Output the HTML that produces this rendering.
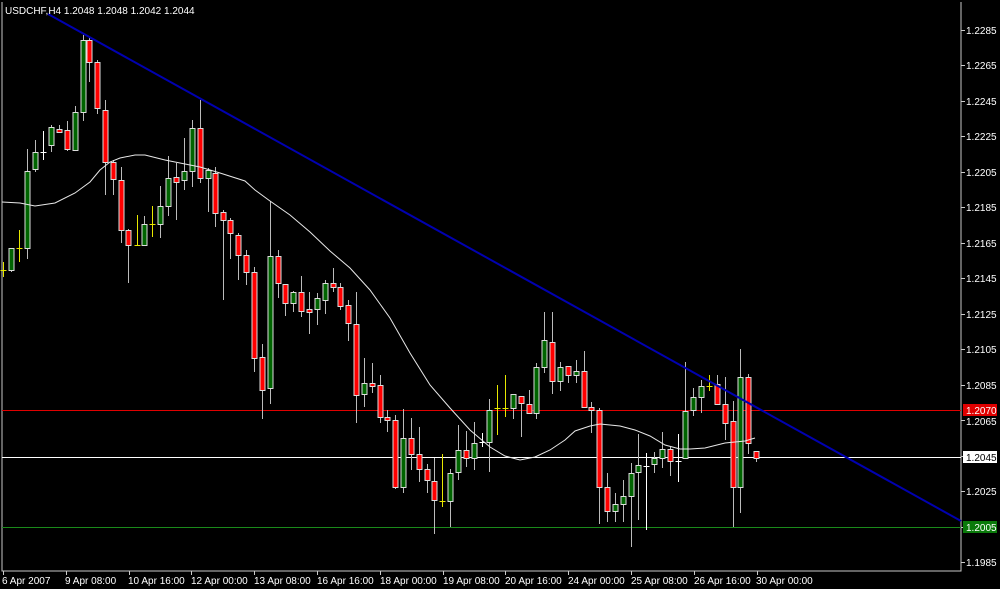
<!DOCTYPE html>
<html><head><meta charset="utf-8"><style>
html,body{margin:0;padding:0;background:#000;width:1000px;height:589px;overflow:hidden}
svg{display:block}
text{font-family:"Liberation Sans",sans-serif;font-size:10px;fill:#fff}
</style></head><body>
<svg id="s" width="1000" height="589" xmlns="http://www.w3.org/2000/svg">
<rect width="1000" height="589" fill="#000"/>
<polyline points="2,2 2,571 961,571 961,2" fill="none" stroke="#c8c8c8" stroke-width="1"/>
<line x1="2" y1="410.5" x2="961" y2="410.5" stroke="#e00000"/>
<line x1="2" y1="457.5" x2="961" y2="457.5" stroke="#ffffff"/>
<line x1="2" y1="527.5" x2="961" y2="527.5" stroke="#1a8a1a"/>
<g id="c"></g>
<polyline fill="none" stroke="#e8e8e8" stroke-width="1" points="2,202 20,203 35,206 55,203 75,193 90,182 100,170 110,162 120,158 135,155 145,155 165,160 185,164 200,167 220,173 245,181 255,190 270,201 290,215 310,232 330,251 350,268 370,290 390,318 410,353 430,385 450,408 470,430 490,447 505,456 520,460 535,457 550,450 565,440 575,431 590,426 600,424 620,426 635,430 650,436 665,445 680,449 690,449 705,448 725,443 745,441 755,438"/>
<line x1="48" y1="14" x2="961" y2="521" stroke="#0000b0" stroke-width="2"/>
<text x="5" y="14" style="font-size:10px">USDCHF,H4  1.2048 1.2048 1.2042 1.2044</text>
<g id="ax"></g>
<rect x="963" y="404" width="34" height="12" fill="#e00000"/>
<text x="966" y="414" >1.2070</text>
<rect x="963" y="451" width="34" height="12" fill="#ffffff"/>
<text x="966" y="461" style="fill:#000">1.2045</text>
<rect x="963" y="521" width="34" height="12" fill="#0a7a0a"/>
<text x="966" y="531">1.2005</text>
<g>
<text x="2" y="584">6 Apr 2007</text>
<text x="65" y="584">9 Apr 08:00</text>
<text x="128" y="584">10 Apr 16:00</text>
<text x="191" y="584">12 Apr 00:00</text>
<text x="254" y="584">13 Apr 08:00</text>
<text x="317" y="584">16 Apr 16:00</text>
<text x="380" y="584">18 Apr 00:00</text>
<text x="443" y="584">19 Apr 08:00</text>
<text x="505" y="584">20 Apr 16:00</text>
<text x="568" y="584">24 Apr 00:00</text>
<text x="631" y="584">25 Apr 08:00</text>
<text x="694" y="584">26 Apr 16:00</text>
<text x="756" y="584">30 Apr 00:00</text>
</g>
<text x="966" y="34">1.2285</text><text x="966" y="69">1.2265</text><text x="966" y="105">1.2245</text><text x="966" y="140">1.2225</text><text x="966" y="176">1.2205</text><text x="966" y="211">1.2185</text><text x="966" y="247">1.2165</text><text x="966" y="282">1.2145</text><text x="966" y="318">1.2125</text><text x="966" y="353">1.2105</text><text x="966" y="389">1.2085</text><text x="966" y="425">1.2065</text><text x="966" y="495">1.2025</text><text x="966" y="566">1.1985</text>
</svg>
<script>
var D=[[3,262,277,270,270,'y'],[11,248,272,270,248],[19,230,262,248,248,'y'],[27,149,259,248,171],[35,140,172,169,152],[43,131,160,152,152,'w'],[51,125,152,145,127],[59,125,133,129,132],[67,121,151,130,149],[75,106,151,150,112],[83,35,121,112,40],[89,38,82,40,62],[97,60,114,62,108],[105,100,195,110,162],[113,160,195,162,179],[121,167,243,180,230],[128,229,283,230,245],[137,215,245,245,245,'y'],[144,216,246,245,224],[152,206,237,224,224,'y'],[160,186,238,224,206],[168,156,216,206,178],[176,163,220,177,182],[184,138,190,180,171],[192,120,187,171,128],[200,100,183,128,178],[208,168,212,178,170],[215,167,227,173,213],[223,210,300,212,220],[230,218,259,220,233],[238,233,280,235,255],[246,250,285,255,272],
[254,267,372,272,358],[262,344,419,357,390],[270,201,404,388,256],[278,250,298,256,283],[285,284,316,284,303],[293,291,312,303,292],[301,276,317,292,311],[309,292,334,309,312],[317,293,325,309,298],[325,280,314,300,283],[333,268,292,283,287],[340,283,310,287,306],[348,300,341,305,323],[356,292,423,324,395],[364,358,407,394,383],[372,363,393,383,386],[380,375,423,385,417],[387,410,432,417,420],[395,415,489,420,487],[403,409,493,487,438],[411,418,470,438,454],[419,427,482,454,469],[427,464,493,469,480],[434,458,534,481,500],[442,454,507,501,501,'y'],[450,469,527,501,473],[458,425,480,472,450],[466,431,467,450,458],[474,422,470,458,443],[482,433,447,442,442,'w'],[489,399,472,442,410],[497,385,435,408,408,'y'],[505,375,417,408,408,'y'],
[513,394,419,408,394],[521,396,437,396,403],[529,390,413,404,413],[536,363,419,413,367],[544,312,373,367,340],[552,312,394,342,381],[560,362,391,381,367],[568,366,383,366,375],[576,360,383,375,371],[584,351,407,371,407],[591,402,433,407,410],[599,408,524,410,487],[607,473,522,487,511],[615,493,522,511,504],[623,480,522,504,496],[631,463,547,496,473],[638,434,520,472,465],[646,453,530,466,466,'w'],[654,452,473,464,458],[662,432,468,458,449],[670,447,476,449,461],[678,434,482,461,461,'w'],[685,362,458,458,411],[693,388,416,410,397],[701,380,413,397,386],[709,375,391,386,386,'y'],[717,375,404,384,404],[725,377,440,404,423],[733,401,527,421,487],[740,349,513,487,377],[748,374,454,377,443],[756,451,462,451,458]];
var h='';
D.forEach(function(c){var x=c[0]+0.5,hi=c[1],lo=c[2],o=c[3],cl=c[4],t=c[5];
if(t){var col=t=='y'?'#e8e800':'#fff';h+='<line x1="'+x+'" y1="'+hi+'" x2="'+x+'" y2="'+lo+'" stroke="'+col+'"/><line x1="'+(x-3)+'" y1="'+(o+0.5)+'" x2="'+(x+3)+'" y2="'+(o+0.5)+'" stroke="'+col+'"/>';return;}
var top=Math.min(o,cl),bot=Math.max(o,cl),bull=cl<o;
h+='<line x1="'+x+'" y1="'+hi+'" x2="'+x+'" y2="'+lo+'" stroke="#bbb"/>';
h+='<rect x="'+(x-2.5)+'" y="'+(top+0.5)+'" width="5" height="'+Math.max(bot-top,2)+'" fill="'+(bull?'#006400':'#ff0000')+'" stroke="#ddd" stroke-width="1"/>';});
document.getElementById('c').innerHTML=h;
var a='';for(var i=0;i<16;i++){var y=Math.round(30+i*35.47)+0.5;a+='<line x1="961" y1="'+y+'" x2="965" y2="'+y+'" stroke="#ccc"/>';}
for(var j=0;j<13;j++){var xx=Math.round(3+j*62.8)+0.5;a+='<line x1="'+xx+'" y1="571" x2="'+xx+'" y2="575" stroke="#ccc"/>';}
document.getElementById('ax').innerHTML=a;
</script>
</body></html>
